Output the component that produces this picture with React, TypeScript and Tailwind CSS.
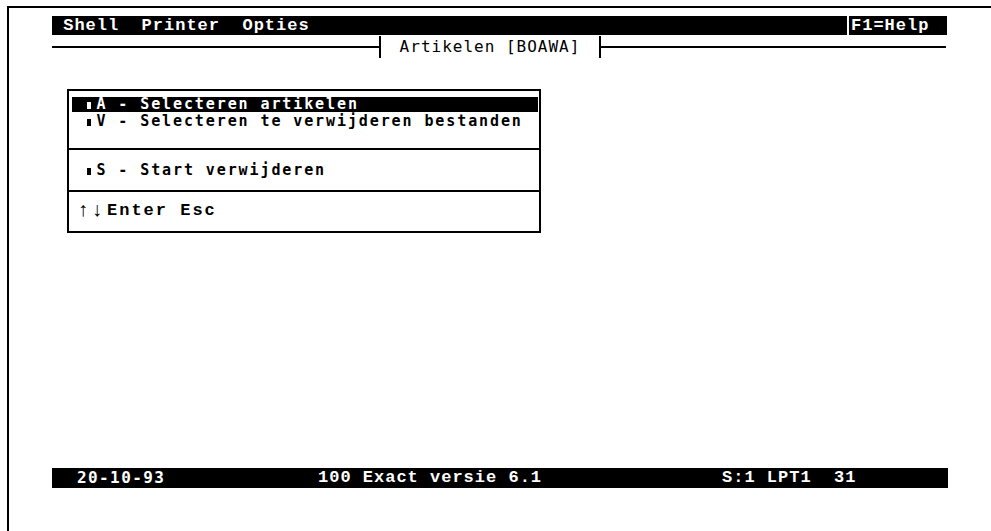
const serif = "font-['Liberation_Mono','Courier_New',monospace]";
const sans = "font-['DejaVu_Sans_Mono','Liberation_Mono',monospace]";

const menuItems = [
  { key: "A", label: "Selecteren artikelen", active: true },
  { key: "V", label: "Selecteren te verwijderen bestanden", active: false },
];

function Bullet() {
  return (
    <span className="inline-block w-[10.9px]">
      <span className="inline-block w-[4px] h-[7px] ml-[1px] bg-current" />
    </span>
  );
}

function MenuBar() {
  return (
    <div className={`flex h-[19px] w-[896px] ${serif} font-bold text-[17px] tracking-[1px] text-white`}>
      <div className="flex-1 bg-black leading-[19px] whitespace-pre">
        {" Shell  Printer  Opties"}
      </div>
      <div className="w-[98px] ml-[2px] mr-[1px] bg-black leading-[19px] pl-[2px]">F1=Help</div>
    </div>
  );
}

function TitleRule() {
  return (
    <div className="flex items-center h-[22px] w-[894px] mt-[1px]">
      <div className="w-[327px] h-[2px] bg-black" />
      <div className="w-[2px] h-full bg-black" />
      <div className={`w-[218px] text-center ${sans} text-[16px] tracking-[1px] leading-[22px] text-black`}>
        Artikelen [BOAWA]
      </div>
      <div className="w-[2px] h-full bg-black" />
      <div className="flex-1 h-[2px] bg-black" />
    </div>
  );
}

function MainMenu() {
  return (
    <div className={`ml-[15px] mt-[31px] w-[474px] h-[144px] border-2 border-black flex flex-col ${sans} font-bold text-[15px] tracking-[1.9px] text-black`}>
      <div className="pt-[6px]">
        {menuItems.map((item) =>
          item.active ? (
            <div
              key={item.key}
              className="ml-[3px] mr-[1px] h-[15px] bg-black text-white leading-[15px] pl-[13.6px] whitespace-pre"
            >
              <Bullet />
              {`${item.key} - ${item.label}`}
            </div>
          ) : (
            <div key={item.key} className="mt-[2px] h-[15px] leading-[15px] pl-[16.6px] whitespace-pre">
              <Bullet />
              {`${item.key} - ${item.label}`}
            </div>
          )
        )}
      </div>
      <div className="mt-[19px] h-[2px] bg-black" />
      <div className="mt-[11px] h-[18px] leading-[18px] pl-[16.6px] whitespace-pre">
        <Bullet />
        {"S - Start verwijderen"}
      </div>
      <div className="mt-[11px] h-[2px] bg-black" />
      {/* key hints: arrows sit a little apart, then the serif "Enter Esc" */}
      <div className="mt-[10px] h-[18px] flex items-center pl-[8px]">
        <span className={`w-[12px] text-center ${serif} text-[20px] tracking-normal leading-[18px]`}>↑</span>
        <span className={`w-[14px] ml-[1px] text-center ${serif} text-[20px] tracking-normal leading-[18px]`}>↓</span>
        <span className={`ml-[3px] ${serif} text-[17px] tracking-[2px] leading-[18px]`}>Enter Esc</span>
      </div>
    </div>
  );
}

function StatusBar() {
  return (
    <div className="mt-[235px] flex h-[20px] w-[896px] bg-black text-white font-bold leading-[20px] whitespace-pre">
      <div className={`w-[266px] pl-[25px] ${sans} text-[16px] tracking-[1.4px]`}>20-10-93</div>
      <div className={`w-[404px] ${serif} text-[17px] tracking-[1px]`}>100 Exact versie 6.1</div>
      <div className={`flex-1 ${serif} text-[17px] tracking-[1px]`}>{"S:1 LPT1  31"}</div>
    </div>
  );
}

export default function App() {
  return (
    <div className="w-[991px] h-[531px] bg-white overflow-hidden">
      <div className="ml-[7px] mt-[6px] h-[525px] border-l-2 border-t-2 border-black pl-[43px] pt-[8px]">
        <MenuBar />
        <TitleRule />
        <MainMenu />
        <StatusBar />
      </div>
    </div>
  );
}
